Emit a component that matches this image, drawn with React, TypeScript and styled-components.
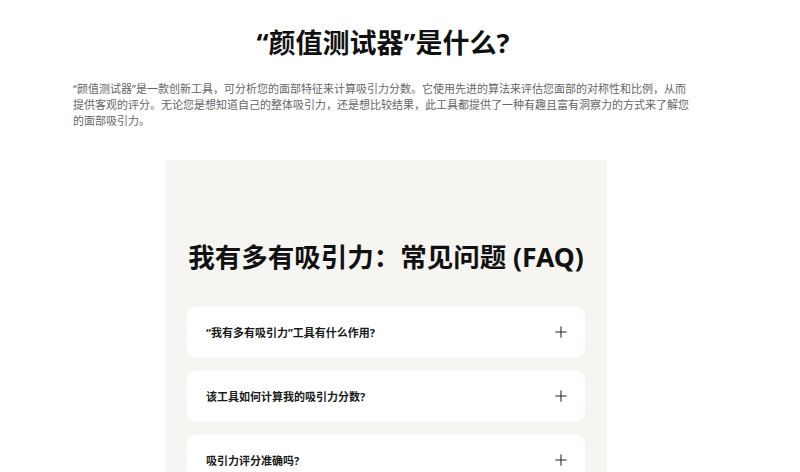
import React from 'react';
import styled, { createGlobalStyle } from 'styled-components';
import { Plus } from 'lucide-react';

const GlobalStyle = createGlobalStyle`
	html, body {
		margin: 0;
		padding: 0;
		background: #ffffff;
	}
	body {
		font-family: 'Noto Sans', 'Noto Sans CJK SC', sans-serif;
		color: #111111;
	}
`;

const Page = styled.main`
	width: 620px;
	padding: 24px 0 0 73px;
`;

const Title = styled.h1`
	margin: 0;
	text-align: center;
	font-size: 27px;
	line-height: 38px;
	font-weight: 700;
	color: #111111;
`;

const Intro = styled.p`
	margin: 19px 0 0;
	font-size: 11px;
	line-height: 16px;
	color: #666666;
`;

const FaqSection = styled.section`
	width: 442px;
	margin: 31px 0 0 92px;
	padding: 77px 22px 40px;
	box-sizing: border-box;
	background: #f6f5f1;
`;

const FaqHeading = styled.h2`
	margin: 0 0 30px;
	text-align: center;
	white-space: nowrap;
	font-size: 26.5px;
	line-height: 40px;
	font-weight: 700;
	color: #111111;
`;

const FaqList = styled.div`
	display: flex;
	flex-direction: column;
	gap: 14px;
`;

const FaqItem = styled.div`
	display: flex;
	align-items: center;
	justify-content: space-between;
	height: 50px;
	padding: 0 15px 0 19px;
	box-sizing: border-box;
	background: #ffffff;
	border-radius: 8px;
`;

const Question = styled.span`
	font-size: 11px;
	font-weight: 700;
	color: #1a1a1a;
`;

const questions = [
	'“我有多有吸引力”工具有什么作用?',
	'该工具如何计算我的吸引力分数?',
	'吸引力评分准确吗?',
];

export default function App() {
	return (
		<>
			<GlobalStyle />
			<Page>
				<Title>“颜值测试器”是什么?</Title>
				<Intro>
					“颜值测试器”是一款创新工具，可分析您的面部特征来计算吸引力分数。它使用先进的算法来评估您面部的对称性和比例，从而提供客观的评分。无论您是想知道自己的整体吸引力，还是想比较结果，此工具都提供了一种有趣且富有洞察力的方式来了解您的面部吸引力。
				</Intro>
				<FaqSection>
					<FaqHeading>我有多有吸引力：常见问题 (FAQ)</FaqHeading>
					<FaqList>
						{questions.map((q) => (
							<FaqItem key={q}>
								<Question>{q}</Question>
								<Plus size={18} strokeWidth={1.4} color="#222222" />
							</FaqItem>
						))}
					</FaqList>
				</FaqSection>
			</Page>
		</>
	);
}
